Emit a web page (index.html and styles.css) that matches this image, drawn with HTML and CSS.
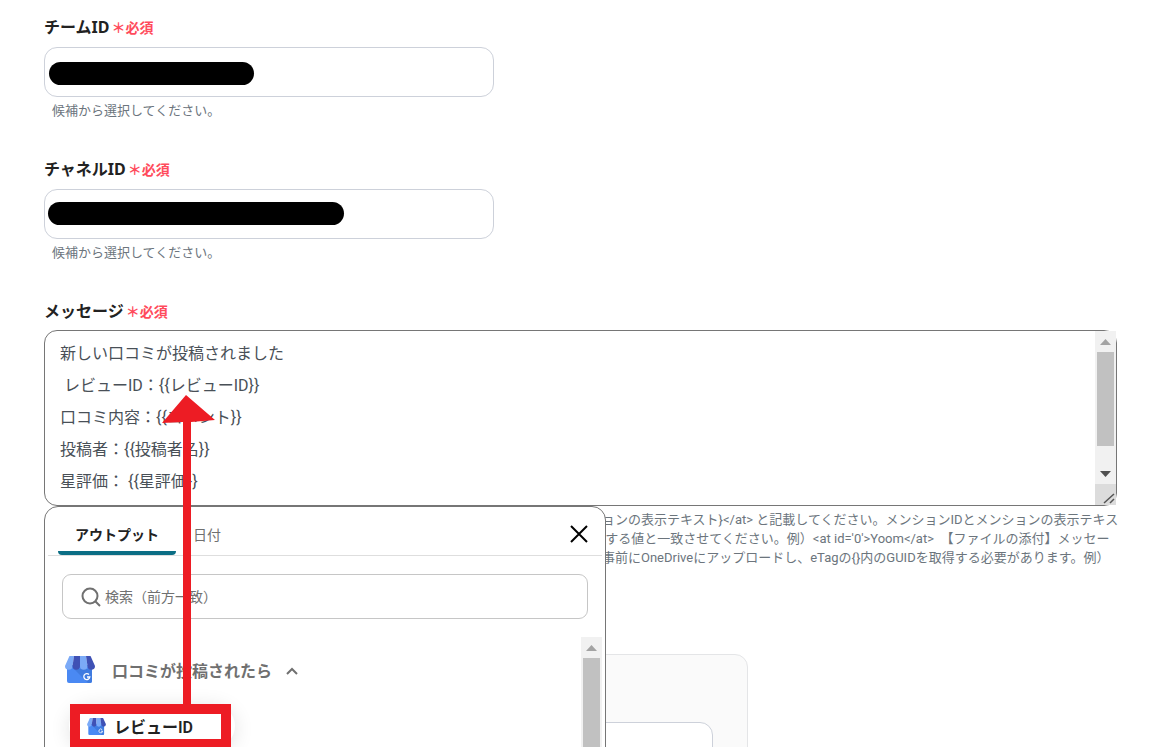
FILE: index.html
```html
<!DOCTYPE html>
<html lang="ja">
<head>
  <meta charset="UTF-8">
  <meta name="viewport" content="width=device-width, initial-scale=1">
  <title>メッセージ設定</title>
  <link rel="stylesheet" href="styles.css">
</head>
<body>
  <svg class="defs" width="0" height="0" aria-hidden="true">
    <symbol id="store" viewBox="0 0 30 27">
      <path d="M2 9h25v16a2 2 0 0 1-2 2H4a2 2 0 0 1-2-2z" fill="#4a89f3"/>
      <path d="M9 13l14 14h2a2 2 0 0 0 2-2V13z" fill="#3f7be0"/>
      <path d="M4 1a1 1 0 0 1 1-1h4L7.500 10a3.700 3.700 0 0 1-7.500 0z" fill="#7baaf7"/>
      <path d="M9 0h6v10a3.700 3.700 0 0 1-7.500 0z" fill="#3f51b5"/>
      <path d="M15 0h6l1.500 10a3.700 3.700 0 0 1-7.500 0z" fill="#7baaf7"/>
      <path d="M21 0h4a1 1 0 0 1 1 1l4 9a3.700 3.700 0 0 1-7.500 0z" fill="#3f51b5"/>
      <path d="M24 18.500a3 3 0 1 0 .8 2.500h-2.800" fill="none" stroke="#fff" stroke-width="1.300"/>
    </symbol>
  </svg>

  <form class="page">
    <div class="field">
      <label for="team">チームID<span class="required">＊必須</span></label>
      <div class="control">
        <input type="text" id="team">
        <span class="mask mask-team"></span>
      </div>
      <p class="hint">候補から選択してください。</p>
    </div>

    <div class="field">
      <label for="channel">チャネルID<span class="required">＊必須</span></label>
      <div class="control">
        <input type="text" id="channel">
        <span class="mask mask-channel"></span>
      </div>
      <p class="hint">候補から選択してください。</p>
    </div>

    <div class="field message">
      <label for="message">メッセージ<span class="required">＊必須</span></label>
      <div class="editor">
        <textarea id="message">新しい口コミが投稿されました
 レビューID：{{レビューID}}
口コミ内容：{{コメント}}
投稿者：{{投稿者名}}
星評価： {{星評価}}</textarea>
        <div class="scrollbar">
          <svg class="arrow" viewBox="0 0 21 21"><path d="M5 14h11l-5.500-6z" fill="#a3a3a3"/></svg>
          <div class="thumb"></div>
          <svg class="arrow" viewBox="0 0 21 21"><path d="M5 8h11l-5.500 6z" fill="#505050"/></svg>
          <svg class="arrow grip" viewBox="0 0 21 21"><path d="M9 19l10-9M15 19l4-4" fill="none" stroke="#555" stroke-width="1.500"/></svg>
        </div>

        <div class="popup">
          <div class="tabs">
            <button type="button" class="tab active">アウトプット</button>
            <button type="button" class="tab">日付</button>
            <button type="button" class="close" aria-label="閉じる">
              <svg width="18" height="18" viewBox="0 0 18 18"><path d="M1 1l16 16M17 1L1 17" stroke="#000" stroke-width="2"/></svg>
            </button>
          </div>
          <div class="search">
            <svg width="20" height="20" viewBox="0 0 20 20"><circle cx="9" cy="9" r="7.500" fill="none" stroke="#707070" stroke-width="2"/><path d="M14 14l5 5" stroke="#707070" stroke-width="2"/></svg>
            <input type="text" placeholder="検索（前方一致）" aria-label="検索（前方一致）">
          </div>
          <div class="list">
            <div class="items">
              <button type="button" class="group">
                <svg width="30" height="27"><use href="#store"/></svg>
                <span>口コミが投稿されたら</span>
                <svg width="14" height="10" viewBox="0 0 14 10"><path d="M2 9l5-5 5 5" fill="none" stroke="#707070" stroke-width="2"/></svg>
              </button>
              <button type="button" class="item">
                <svg width="19" height="17" viewBox="0 0 30 27"><use href="#store"/></svg>
                レビューID
              </button>
            </div>
            <div class="scrollbar">
              <svg class="arrow" viewBox="0 0 21 21"><path d="M5 14h11l-5.500-6z" fill="#a3a3a3"/></svg>
              <div class="thumb"></div>
            </div>
          </div>
        </div>

        <!-- red box on the item and arrow up to the message -->
        <svg class="marker" width="162" height="356" viewBox="0 0 162 356" aria-hidden="true">
          <path d="M116 0l29 25-24 2v284h-8V27l-21 1z" fill="#ed1c24"/>
          <path d="M5 314h151v35H5z" fill="none" stroke="#ed1c24" stroke-width="10"/>
        </svg>
      </div>
      <p class="hint note">ョンの表示テキスト}&lt;/at&gt; と記載してください。メンションIDとメンションの表示テキス<br>&nbsp;する値と一致させてください。例）&lt;at id='0'&gt;Yoom&lt;/at&gt;　【ファイルの添付】メッセー<br>事前にOneDriveにアップロードし、eTagの{}内のGUIDを取得する必要があります。例）</p>
    </div>

    <div class="card">
      <input type="text" aria-label="添付ファイル">
    </div>
  </form>
</body>
</html>
```
FILE: styles.css
```css
* {
  box-sizing: border-box;
}

body {
  margin: 0;
  height: 100vh;
  overflow: hidden;
  background: #fff;
  color: #222;
  font-family: "Noto Sans", "Noto Sans CJK JP", sans-serif;
  font-size: 16px;
}

button,
input,
textarea {
  font-family: inherit;
}

button {
  border: 0;
  background: none;
  padding: 0;
}

.defs {
  position: absolute;
}

.page {
  padding: 15px 45px 0 44px;
}

.field {
  margin-bottom: 37px;
}

.field label {
  display: block;
  height: 24px;
  margin-bottom: 8px;
  line-height: 24px;
  font-weight: 700;
}

.required {
  margin-left: 2px;
  color: #ff4b5c;
  font-size: 14px;
}

.control {
  position: relative;
  max-width: 450px;
}

.control input {
  display: block;
  width: 100%;
  height: 50px;
  padding: 0 16px;
  border: 1px solid #cdd1da;
  border-radius: 13px;
}

.mask {
  position: absolute;
  height: 23px;
  border-radius: 12px;
  background: #000;
}

.mask-team {
  top: 15px;
  left: 5px;
  width: 205px;
}

.mask-channel {
  top: 13px;
  left: 4px;
  width: 296px;
}

.hint {
  margin: 4px 0 0;
  padding-left: 8px;
  color: #6c757d;
  font-family: Roboto, "Noto Sans CJK JP", sans-serif;
  font-size: 13px;
  line-height: 19px;
}

.message {
  margin-bottom: 87px;
}

.message label {
  margin-bottom: 7px;
}

.editor {
  position: relative;
  display: flex;
  height: 176px;
  border: 1px solid #767676;
  border-radius: 13px;
}

.editor textarea {
  flex: 1;
  min-width: 0;
  margin: 0;
  padding: 7px 15px 0;
  border: 0;
  border-radius: 13px;
  outline: 0;
  resize: none;
  overflow: hidden;
  background: none;
  color: #495057;
  font-family: Roboto, "Noto Sans CJK JP", sans-serif;
  font-size: 16px;
  line-height: 32px;
}

.scrollbar {
  display: flex;
  flex-direction: column;
  width: 21px;
  background: #f1f1f1;
}

.scrollbar .arrow {
  flex: none;
  width: 21px;
  height: 21px;
}

.scrollbar .thumb {
  flex: 1;
  margin: 0 2px;
  background: #c1c1c1;
}

.editor > .scrollbar .thumb {
  margin-bottom: 17px;
}

.scrollbar .grip {
  background: #dcdcdc;
}

.note {
  padding-left: 558px;
  white-space: nowrap;
}

.popup {
  position: absolute;
  top: 175px;
  left: -1px;
  display: flex;
  flex-direction: column;
  width: 562px;
  height: 320px;
  padding: 0 3px;
  border: 1px solid #767676;
  border-radius: 14px;
  background: #fff;
}

.tabs {
  display: flex;
  height: 49px;
  padding: 0 14px 0 10px;
  border-bottom: 1px solid #dedede;
}

.tab {
  padding: 6px 17px 0;
  color: #707070;
  font-size: 14px;
}

.tab.active {
  border-radius: 4px;
  background: linear-gradient(#0b6e85, #0b6e85) bottom / 100% 4px no-repeat;
  color: #222;
  font-weight: 700;
}

.close {
  display: flex;
  align-items: center;
  margin-left: auto;
  padding-top: 6px;
}

.search {
  display: flex;
  align-items: center;
  gap: 4px;
  height: 45px;
  margin: 18px 14px;
  padding: 0 18px;
  border: 1px solid #c6c6c6;
  border-radius: 9px;
}

.search input {
  flex: 1;
  min-width: 0;
  padding: 0;
  border: 0;
  font-size: 14px;
}

.search input::placeholder {
  color: #707070;
}

.list {
  display: flex;
  flex: 1;
}

.items {
  display: flex;
  flex: 1;
  flex-direction: column;
  align-items: flex-start;
  gap: 16px;
  padding: 14px 17px;
}

.group {
  display: flex;
  align-items: center;
  height: 37px;
  color: #707070;
  font-size: 16px;
  font-weight: 700;
}

.group span {
  margin: 0 13px 0 17px;
}

.item {
  display: flex;
  align-items: center;
  gap: 8px;
  height: 44px;
  margin-left: 4px;
  padding: 0 42px 0 18px;
  border-radius: 22px;
  box-shadow: 0 3px 20px rgba(0, 0, 0, 0.12);
  color: #222;
  font-family: Roboto, "Noto Sans CJK JP", sans-serif;
  font-size: 16px;
  font-weight: 600;
}

.marker {
  position: absolute;
  top: 64px;
  left: 25px;
}

.card {
  max-width: 704px;
  height: 200px;
  padding: 67px 34px;
  border: 1px solid #e4e5e7;
  border-radius: 13px;
  background: #fafafa;
}

.card input {
  width: 100%;
  height: 50px;
  border: 1px solid #cdd1da;
  border-radius: 13px;
}
```
